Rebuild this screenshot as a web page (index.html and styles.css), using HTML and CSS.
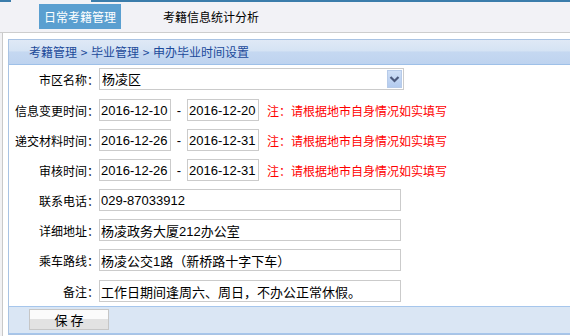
FILE: index.html
```html
<!DOCTYPE html>
<html lang="zh-CN">
<head>
  <meta charset="UTF-8">
  <title>申办毕业时间设置</title>
  <link rel="stylesheet" href="styles.css">
</head>
<body>

  <div class="topbar">
    <a class="tab active">日常考籍管理</a>
    <a class="tab">考籍信息统计分析</a>
  </div>

  <div class="main">
    <div class="panel">
      <div class="crumb">考籍管理 &gt; 毕业管理 &gt; 申办毕业时间设置</div>

      <form class="form">
        <div class="row first">
          <label>市区名称：</label>
          <div class="select-box">
            <select class="select">
              <option>杨凌区</option>
            </select>
            <span class="select-btn">
              <svg width="13" height="16" viewBox="0 0 13 16"><path d="M2.5 6l4 4 4-4" fill="none" stroke="#4c5a7d" stroke-width="2.2"/></svg>
            </span>
          </div>
        </div>

        <div class="row">
          <label>信息变更时间：</label>
          <input class="date" type="text" value="2016-12-10">
          <span class="dash">-</span>
          <input class="date" type="text" value="2016-12-20">
          <span class="note">注：请根据地市自身情况如实填写</span>
        </div>

        <div class="row">
          <label>递交材料时间：</label>
          <input class="date" type="text" value="2016-12-26">
          <span class="dash">-</span>
          <input class="date" type="text" value="2016-12-31">
          <span class="note">注：请根据地市自身情况如实填写</span>
        </div>

        <div class="row">
          <label>审核时间：</label>
          <input class="date" type="text" value="2016-12-26">
          <span class="dash">-</span>
          <input class="date" type="text" value="2016-12-31">
          <span class="note">注：请根据地市自身情况如实填写</span>
        </div>

        <div class="row">
          <label>联系电话：</label>
          <input class="text" type="text" value="029-87033912">
        </div>

        <div class="row">
          <label>详细地址：</label>
          <input class="text" type="text" value="杨凌政务大厦212办公室">
        </div>

        <div class="row">
          <label>乘车路线：</label>
          <input class="text" type="text" value="杨凌公交1路（新桥路十字下车）">
        </div>

        <div class="row last">
          <label>备注：</label>
          <input class="text" type="text" value="工作日期间逢周六、周日，不办公正常休假。">
        </div>
      </form>

      <div class="footer">
        <button type="button" class="save-btn">保 存</button>
      </div>
    </div>
  </div>

</body>
</html>
```

FILE: styles.css
```css
html, body {
  height: 100%;
}
body {
  margin: 0;
  display: flex;
  flex-direction: column;
  font-family: "Noto Sans CJK SC", sans-serif;
  font-size: 12px;
  color: #000;
  background: #f1f1f3;
  overflow: hidden;
}

/* top tabs */
.topbar {
  flex: none;
  height: 28px;
  padding: 4px 0 0 39px;
  display: flex;
  align-items: flex-start;
  border-bottom: 1px solid #cdcdcd;
  background:
    linear-gradient(to right, #3b7dab 11px, transparent 11px, transparent 91px, #3b7dab 91px) top / 100% 2px no-repeat,
    #f2f2f6;
}
.tab {
  height: 25px;
  line-height: 25px;
  padding: 0 5px;
  font-size: 12px;
  color: #000;
}
.tab.active {
  background: #5a9fd0;
  color: #fff;
}
.tab + .tab {
  margin-left: 37px;
}

/* content */
.main {
  flex: 1;
  margin-left: 2px;
  padding: 6px 0 0 5px;
  border-left: 1px solid #c9c9c9;
  background: #fff;
}
.panel {
  border: 1px solid #a9c3e3;
  border-right: 0;
  background: #fff;
}
.crumb {
  height: 24px;
  line-height: 24px;
  padding-left: 20px;
  color: #1c4a9a;
  font-size: 12px;
  word-spacing: 1px;
  border-bottom: 1px solid #9ec0e8;
  background: linear-gradient(#dfe9f6, #d5e3f4 45%, #c5d8f1 50%, #bed3ef);
}

.form {
  margin: 0;
  padding: 3px 0 4px;
  display: flex;
  flex-direction: column;
  gap: 8px;
}
.row {
  display: flex;
  align-items: center;
  height: 22px;
}
.row.first {
  margin-bottom: 1px;
}
.row.last {
  margin-top: 1px;
}
.row label {
  width: 90px;
  flex: none;
  text-align: right;
  font-size: 12px;
}

input, select {
  font-family: "Liberation Sans", "Noto Sans CJK SC", sans-serif;
  font-size: 13px;
  color: #000;
}
.text, .date {
  box-sizing: border-box;
  height: 22px;
  padding: 0 1px;
  border: 1px solid #cbcbcb;
  outline: none;
}
.text {
  width: 302px;
}
.date {
  width: 72px;
}
.dash {
  width: 16px;
  text-align: center;
  font-family: "Liberation Sans", sans-serif;
  font-size: 13px;
}
.note {
  margin-left: 8px;
  color: #f00;
  font-size: 12px;
}

.select-box {
  box-sizing: border-box;
  width: 305px;
  height: 22px;
  padding: 1px;
  display: flex;
  border: 1px solid #cbcbcb;
}
.select {
  flex: 1;
  border: 0;
  padding: 0 1px;
  appearance: none;
  -webkit-appearance: none;
  background: #fff;
  outline: none;
}
.select-btn {
  box-sizing: border-box;
  width: 15px;
  height: 18px;
  display: flex;
  align-items: center;
  justify-content: center;
  border: 1px solid #b7cbe9;
  background: linear-gradient(#cfdff6, #b3cbef);
}

.footer {
  height: 26px;
  border-top: 1px solid #a6c6ec;
  border-bottom: 1px solid #a6c6ec;
  background: #dae6f4;
}
.save-btn {
  display: block;
  margin: 2px 0 0 20px;
  width: 80px;
  height: 21px;
  padding: 0;
  border: 1px solid #c6c6c6;
  background: linear-gradient(#fbfbfb 50%, #e2e2e2 50%);
  font-family: "Noto Sans CJK SC", sans-serif;
  font-size: 13px;
  color: #000;
}
```
